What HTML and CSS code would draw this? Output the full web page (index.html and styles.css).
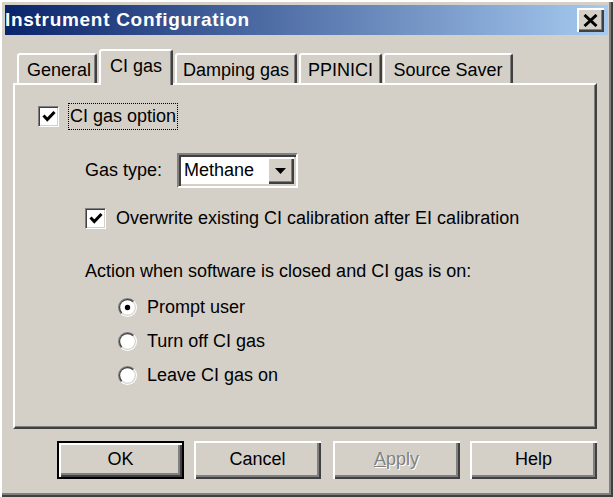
FILE: index.html
```html
<!DOCTYPE html>
<html>
<head>
<meta charset="utf-8">
<link rel="stylesheet" href="styles.css">
</head>
<body>
<div class="window">
  <div class="titlebar">
    <span class="title">Instrument Configuration</span>
    <div class="close">
      <svg width="15" height="13" viewBox="0 0 15 13"><path d="M1.5 1 L13.5 12 M13.5 1 L1.5 12" stroke="#000" stroke-width="3"/></svg>
    </div>
  </div>
  <div class="content">
    <div class="tabs">
      <div class="tab tab-general">General</div>
      <div class="tab tab-ci selected">CI gas</div>
      <div class="tab tab-damping">Damping gas</div>
      <div class="tab tab-ppinici">PPINICI</div>
      <div class="tab tab-source">Source Saver</div>
    </div>
    <div class="panel">
      <div class="row row-option">
        <span class="checkbox"><svg width="14" height="13" viewBox="0 0 14 13"><path d="M1.5 5.5 L5.3 9.5 L12.5 2" fill="none" stroke="#000" stroke-width="3"/></svg></span>
        <span class="focus">CI gas option</span>
      </div>
      <div class="sub">
        <div class="row row-gas">
          <span class="label">Gas type:</span>
          <div class="select">
            <span class="select-value">Methane</span>
            <span class="select-btn"><svg width="11" height="6" viewBox="0 0 11 6"><path d="M0 0 H11 L5.5 6 Z" fill="#000"/></svg></span>
          </div>
        </div>
        <div class="row row-overwrite">
          <span class="checkbox"><svg width="14" height="13" viewBox="0 0 14 13"><path d="M1.5 5.5 L5.3 9.5 L12.5 2" fill="none" stroke="#000" stroke-width="3"/></svg></span>
          <span class="cb-label">Overwrite existing CI calibration after EI calibration</span>
        </div>
        <div class="action">Action when software is closed and CI gas is on:</div>
        <div class="radios">
          <div class="radio-row"><span class="radio"><svg width="19" height="19" viewBox="0 0 19 19"><path d="M2.78 16.22 A9.5 9.5 0 0 1 16.22 2.78 Z" fill="#808080"/><path d="M16.22 2.78 A9.5 9.5 0 0 1 2.78 16.22 Z" fill="#ffffff"/><path d="M3.49 15.51 A8.5 8.5 0 0 1 15.51 3.49 Z" fill="#404040"/><path d="M15.51 3.49 A8.5 8.5 0 0 1 3.49 15.51 Z" fill="#d4d0c8"/><circle cx="9.5" cy="9.5" r="7.3" fill="#fff"/><circle cx="9.5" cy="9.5" r="2.7" fill="#000"/></svg></span>Prompt user</div>
          <div class="radio-row"><span class="radio"><svg width="19" height="19" viewBox="0 0 19 19"><path d="M2.78 16.22 A9.5 9.5 0 0 1 16.22 2.78 Z" fill="#808080"/><path d="M16.22 2.78 A9.5 9.5 0 0 1 2.78 16.22 Z" fill="#ffffff"/><path d="M3.49 15.51 A8.5 8.5 0 0 1 15.51 3.49 Z" fill="#404040"/><path d="M15.51 3.49 A8.5 8.5 0 0 1 3.49 15.51 Z" fill="#d4d0c8"/><circle cx="9.5" cy="9.5" r="7.3" fill="#fff"/></svg></span>Turn off CI gas</div>
          <div class="radio-row"><span class="radio"><svg width="19" height="19" viewBox="0 0 19 19"><path d="M2.78 16.22 A9.5 9.5 0 0 1 16.22 2.78 Z" fill="#808080"/><path d="M16.22 2.78 A9.5 9.5 0 0 1 2.78 16.22 Z" fill="#ffffff"/><path d="M3.49 15.51 A8.5 8.5 0 0 1 15.51 3.49 Z" fill="#404040"/><path d="M15.51 3.49 A8.5 8.5 0 0 1 3.49 15.51 Z" fill="#d4d0c8"/><circle cx="9.5" cy="9.5" r="7.3" fill="#fff"/></svg></span>Leave CI gas on</div>
        </div>
      </div>
    </div>
    <div class="buttons">
      <div class="btn default"><span class="btn-inner">OK</span></div>
      <div class="btn"><span class="btn-inner">Cancel</span></div>
      <div class="btn disabled"><span class="btn-inner"><u>A</u>pply</span></div>
      <div class="btn"><span class="btn-inner">Help</span></div>
    </div>
  </div>
</div>
</body>
</html>
```

FILE: styles.css
```css
html, body {
  margin: 0;
  padding: 0;
  background: #d4d0c8;
}
body {
  font-family: "Liberation Sans", Arial, sans-serif;
  font-size: 18px;
  color: #000;
}
.window {
  width: 613px;
  height: 497px;
  box-sizing: border-box;
  background: #d4d0c8;
  padding: 5px 5px 4px 5px;
  box-shadow: inset 2px 2px 0 #ffffff, inset -2px -2px 0 #404040, inset -4px -4px 0 #808080;
  display: flex;
  flex-direction: column;
}
.titlebar {
  height: 30px;
  background: linear-gradient(to right, #0a246a, #a6caf0);
  display: flex;
  align-items: center;
  justify-content: space-between;
  padding: 0 4px 0 0;
}
.title {
  color: #fff;
  font-weight: bold;
  font-size: 19px;
  letter-spacing: 0.7px;
}
.close {
  width: 27px;
  height: 24px;
  box-sizing: border-box;
  background: #d4d0c8;
  box-shadow: inset 2px 2px 0 #ffffff, inset -2px -2px 0 #404040, inset -3px -3px 0 #808080;
  display: flex;
  align-items: center;
  justify-content: center;
  padding-right: 1px;
}
.content {
  padding: 14px 11px 0 8px;
  display: flex;
  flex-direction: column;
}
.tabs {
  display: flex;
  align-items: flex-end;
  height: 34px;
  padding-left: 4px;
}
.tab {
  height: 30px;
  box-sizing: border-box;
  border-top: 2px solid #fff;
  border-left: 2px solid #fff;
  border-right: 2px solid #404040;
  border-radius: 3px 3px 0 0;
  box-shadow: inset -1px 0 0 #808080;
  display: flex;
  align-items: center;
  justify-content: center;
  padding-top: 2px;
}
.tab-general { width: 80px; padding-left: 4px; }
.tab-ci { width: 74px; }
.tab-damping { width: 122px; margin-left: 2px; }
.tab-ppinici { width: 83px; margin-left: 2px; }
.tab-source { width: 130px; margin-left: 1px; }
.tab.selected {
  height: 36px;
  margin-bottom: -2px;
  margin-left: 2px;
  position: relative;
  z-index: 1;
  background: #d4d0c8;
  padding-bottom: 4px;
  padding-top: 0;
}
.panel {
  height: 346px;
  box-sizing: border-box;
  border-top: 2px solid #fff;
  border-left: 2px solid #fff;
  border-right: 2px solid #404040;
  border-bottom: 2px solid #404040;
  box-shadow: inset -1px -1px 0 #808080;
  padding: 18px 0 0 23px;
  display: flex;
  flex-direction: column;
}
.row {
  display: flex;
  align-items: center;
}
.row-option {
  height: 27px;
}
.checkbox {
  width: 21px;
  height: 21px;
  box-sizing: border-box;
  background: #fff;
  border-top: 1px solid #808080;
  border-left: 1px solid #808080;
  border-right: 1px solid #fff;
  border-bottom: 1px solid #fff;
  box-shadow: inset 1px 1px 0 #404040, inset -1px -1px 0 #d4d0c8;
  display: flex;
  align-items: center;
  justify-content: center;
  flex: none;
}
.focus {
  margin-left: 9px;
  border: 1px dotted #000;
  padding: 2px 1px 2px 1px;
  line-height: 21px;
}
.sub {
  padding-left: 47px;
  display: flex;
  flex-direction: column;
}
.row-gas {
  margin-top: 23px;
  height: 35px;
}
.label {
  width: 92px;
}
.select {
  width: 121px;
  height: 35px;
  box-sizing: border-box;
  background: #fff;
  border-top: 2px solid #808080;
  border-left: 2px solid #808080;
  border-right: 2px solid #fff;
  border-bottom: 2px solid #fff;
  box-shadow: inset 2px 2px 0 #404040, inset -2px -2px 0 #d4d0c8;
  display: flex;
  align-items: center;
  justify-content: space-between;
  padding: 2px;
}
.select-value {
  padding-left: 3px;
}
.select-btn {
  width: 27px;
  height: 27px;
  box-sizing: border-box;
  background: #d4d0c8;
  box-shadow: inset 2px 2px 0 #ffffff, inset -2px -2px 0 #404040, inset -3px -3px 0 #808080;
  display: flex;
  align-items: center;
  justify-content: center;
}
.row-overwrite {
  margin-top: 17px;
  height: 27px;
}
.cb-label {
  margin-left: 10px;
}
.action {
  margin-top: 28px;
  line-height: 22px;
}
.radios {
  margin-top: 8px;
  padding-left: 33px;
  display: flex;
  flex-direction: column;
}
.radio-row {
  height: 34px;
  display: flex;
  align-items: center;
}
.radio {
  width: 19px;
  height: 19px;
  margin-right: 10px;
  display: flex;
}
.buttons {
  display: flex;
  justify-content: flex-end;
  gap: 10px;
  margin-top: 12px;
}
.btn {
  width: 127px;
  height: 38px;
  box-sizing: border-box;
  background: #d4d0c8;
  box-shadow: inset 2px 2px 0 #ffffff, inset -2px -2px 0 #404040, inset -4px -4px 0 #808080;
  display: flex;
  align-items: center;
  justify-content: center;
}
.btn.disabled {
  margin-left: 2px;
  color: #808080;
  text-shadow: 1px 1px 0 #fff;
}
.btn.default {
  border: 2px solid #000;
}
.btn-inner {
  padding-bottom: 2px;
}
```
